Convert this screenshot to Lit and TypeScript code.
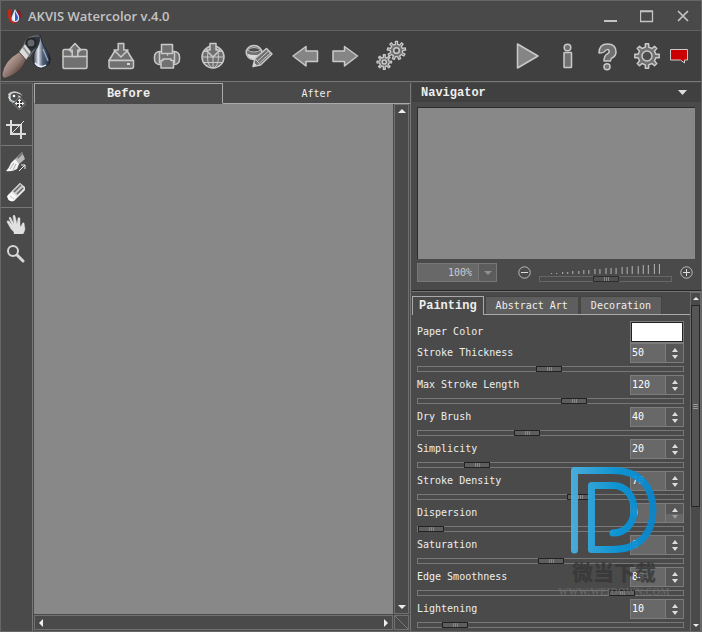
import { LitElement, html, css, svg, nothing, TemplateResult } from "lit";
import { customElement, property } from "lit/decorators.js";
import { classMap } from "lit/directives/class-map.js";

/** Outline of a cog wheel with square teeth. */
function cog(cx: number, cy: number, outer: number, root: number, teeth: number): string {
  const step = (Math.PI * 2) / teeth;
  const parts: string[] = [];
  for (let i = 0; i < teeth; i++) {
    const a = i * step - Math.PI / 2;
    const pts: Array<[number, number]> = [
      [root, a - step * 0.24],
      [outer, a - step * 0.17],
      [outer, a + step * 0.17],
      [root, a + step * 0.24],
    ];
    for (const [r, t] of pts) {
      parts.push(`${(cx + r * Math.cos(t)).toFixed(2)},${(cy + r * Math.sin(t)).toFixed(2)}`);
    }
  }
  return "M" + parts.join("L") + "Z";
}

const icons: Record<string, TemplateResult> = {
  open: svg`<path d="M3 10q0-1.5 1.5-1.5h5l2 2.5h7l2-2.500h5q1.500 0 1.500 1.500v16q0 1.500-1.500 1.500h-21.500Q3 27.500 3 26zM3 15.500h24.500"/><path d="M15 2.500l6 6.500h-3.200v6.500h-5.600V9H9z"/>`,
  save: svg`<path d="M8.500 10.500h13l5.500 9H3z"/><path d="M3 19.500h24.500v6q0 2-2 2H5q-2 0-2-2z"/><path d="M12.200 2.500h5.600v6.500H22l-7 7-7-7h4.200z"/><path class="lit" d="M21 22h3v2h-3z"/>`,
  print: svg`<rect x="2.500" y="10.500" width="25" height="13" rx="5"/><path d="M7.500 10.500v12M22.500 10.500v12"/><path d="M9.500 3.500h11v9h-11z"/><path d="M9 19.500h2v-1.500h8v1.500h2.500v7.500H9z"/><circle class="lit" cx="15.500" cy="14" r=".8"/>`,
  web: svg`<circle cx="15" cy="16" r="11"/><ellipse cx="15" cy="16" rx="5.500" ry="11" stroke-width="1"/><path d="M4 16h22M6 10.500h18M6 21.500h18M15 16v11" stroke-width="1"/><path d="M12 2.500h6v6.500h4l-7 7-7-7h4z"/>`,
  brush: svg`<ellipse cx="10" cy="11.500" rx="7.800" ry="7"/><path class="hole" d="M3 9q7-5 14 0-7 4-14 0z" stroke-width=".8"/><path class="lit" d="M3 12.500q6 2.500 12 1l-3 4.500q-7 1-9-5.500z"/><path d="M9 25.500l2-8L22.500 7.500l5.500 5.500L16.500 24z"/><path d="M13.500 20L25 9.500M15.500 22L27 11.500M11 17.500l5.500 6.500" stroke-width="1"/><path class="lit" d="M9 25.500l1-4 3 3z"/>`,
  back: svg`<path class="solid" d="M3 15L16 5.500v4.500h11.500v10.500H16V25z"/>`,
  forward: svg`<path class="solid" d="M27.500 15l-13-9.500v4.500H3v10.500h11.500V25z"/>`,
  batch: svg`<path d="${cog(20.5, 9.5, 9.2, 6.3, 9)}" stroke-width="1.300"/><circle class="hole" cx="20.500" cy="9.500" r="2.800"/><path d="${cog(8.3, 21, 7.3, 4.8, 8)}" stroke-width="1.300"/><circle class="hole" cx="8.300" cy="21" r="2"/>`,
  run: svg`<path class="solid" d="M5.500 3v24L26 15z"/>`,
  info: svg`<circle cx="15.500" cy="6.500" r="3.300"/><rect x="12" y="11.500" width="7.500" height="15" rx=".5"/>`,
  help: svg`<path d="M7 12Q7 3 15.500 3T24 11q0 4-4 6-1.500 1-1.500 3h-6.500q0-5 3-7 3-1.500 2-3.500-1.500-2-4 .5-1 2-6 2z"/><circle cx="15" cy="25.700" r="3"/>`,
  options: svg`<path d="${cog(15, 15, 12.3, 9, 8)}"/><circle class="hole" cx="15" cy="15" r="5"/>`,
};

@customElement("tool-icon")
export class ToolIcon extends LitElement {
  @property() name = "open";

  static styles = css`
    :host { display: block; width: 30px; height: 30px; }
    .art { display: block; fill: #707070; stroke: #c9c9c9; stroke-linejoin: round; overflow: visible; }
    .art .solid { fill: #858585; }
    .art .hole { fill: #4c4c4c; }
    .art .lit { fill: #d8d8d8; stroke: none; }
  `;

  render() {
    return html`<svg class="art" width="30" height="30" viewBox="0 0 30 30" stroke-width="1.500">${icons[this.name] ?? nothing}</svg>`;
  }
}

@customElement("slider-field")
export class SliderField extends LitElement {
  @property() label = "";
  @property({ type: Number }) value = 0;
  @property({ type: Number }) min = 0;
  @property({ type: Number }) max = 100;

  static styles = css`
    :host { display: block; }
    .line { display: flex; align-items: center; justify-content: space-between; height: 20px; }
    .label { line-height: 18px; }
    .spin { display: flex; box-sizing: border-box; width: 54px; height: 20px; border: 1px solid #7c7c7c; background: #686868; }
    .number { flex: 1; min-width: 0; border: 0; padding: 0 1px; background: none; color: #fff; font: inherit; outline: 0; }
    .steps { display: flex; flex-direction: column; gap: 1px; width: 17px; border-left: 1px solid #7c7c7c; background: #565656; }
    .step { display: flex; flex: 1; align-items: flex-end; justify-content: center; border: 0; padding: 0 0 1px; background: none; color: #dedede; }
    .step + .step { align-items: flex-start; padding: 1px 0 0; }
    .step:disabled { background: #686868; color: #999; }
    .tri { display: block; fill: currentColor; }
    .range { display: block; appearance: none; box-sizing: border-box; width: 100%; height: 6px; margin: 3px 0; border: 1px solid #787878; background: #4a4a4a; }
    .range::-webkit-slider-thumb {
      appearance: none; box-sizing: border-box; width: 26px; height: 6px; border: 1px solid #222;
      background:
        linear-gradient(#888, #888) 10px 0 / 1px 100% no-repeat,
        linear-gradient(#888, #888) 12px 0 / 1px 100% no-repeat,
        linear-gradient(#888, #888) 14px 0 / 1px 100% no-repeat,
        #5e5e5e;
    }
  `;

  private change(v: number) {
    this.value = Math.min(this.max, Math.max(this.min, v));
  }

  render() {
    return html`
      <div class="line">
        <label class="label" for="number">${this.label}</label>
        <div class="spin">
          <input id="number" class="number" inputmode="numeric" .value=${String(this.value)}
            @change=${(e: Event) => this.change(Number((e.target as HTMLInputElement).value))} />
          <div class="steps">
            <button class="step" aria-label="Increase ${this.label}" @click=${() => this.change(this.value + 1)}>
              <svg class="tri" width="6" height="4" viewBox="0 0 6 4"><path d="M3 0l3 4H0z" /></svg>
            </button>
            <button class="step" aria-label="Decrease ${this.label}" ?disabled=${this.value <= this.min && this.min === 0}
              @click=${() => this.change(this.value - 1)}>
              <svg class="tri" width="6" height="4" viewBox="0 0 6 4"><path d="M0 0h6L3 4z" /></svg>
            </button>
          </div>
        </div>
      </div>
      <input class="range" type="range" aria-label=${this.label} min=${this.min} max=${this.max}
        .value=${String(this.value)}
        @input=${(e: Event) => this.change(Number((e.target as HTMLInputElement).value))} />
    `;
  }
}

interface Setting { label: string; value: number; min?: number; max?: number }

const settings: Setting[] = [
  { label: "Stroke Thickness", value: 50, min: 1 },
  { label: "Max Stroke Length", value: 120, max: 200 },
  { label: "Dry Brush", value: 40 },
  { label: "Simplicity", value: 20, min: 1 },
  { label: "Stroke Density", value: 70, min: 20 },
  { label: "Dispersion", value: 0 },
  { label: "Saturation", value: 0, min: -100 },
  { label: "Edge Smoothness", value: 80 },
  { label: "Lightening", value: 10 },
];

const tools: Array<Array<{ title: string; art: TemplateResult }>> = [
  [
    {
      title: "Quick Preview",
      art: svg`<path d="M2 4Q7-1 14 3l3 3Q9 0 3 7z" fill="#ccc"/><path d="M2 7q6-6 13 0-2 5-7 5-4 0-6-5z" fill="#e4e4e4"/><circle cx="8.500" cy="7" r="4" fill="#4b5154"/><circle cx="8" cy="6" r="1.300" fill="#fff"/><path d="M3 10q3 3 7 3" fill="none" stroke="#bbb"/><path d="M13.500 7l6.500 6.500-6.500 6.500L7 13.500z" fill="#333" stroke="#8c8c8c"/><path d="M13.500 8.500l2 2.500h-1.400v2h1.900v-1.500l2.500 2-2.500 2V14h-1.900v2h1.400l-2 2.500-2-2.500h1.400v-2H11v1.500l-2.500-2 2.500-2V13h1.900v-2h-1.400z" fill="#f2f2f2"/>`,
    },
    {
      title: "Crop",
      art: svg`<path d="M0 5h15v14M5 0v14h15" fill="none" stroke="#ddd" stroke-width="2"/><path d="M6 13L18 1" stroke="#ddd"/>`,
    },
  ],
  [
    {
      title: "Stroke Direction",
      art: svg`<path d="M9 7l7-7 3 7-7 6z" fill="#b8b8b8"/><path d="M11 5l5-5 1 2-5 5z" fill="#777"/><path d="M0 19q3-3 5-8l4-4 4 5-2 5q-5 3-11 2z" fill="#f4f4f4"/><path d="M4 17l4-6M7 18l3-6" stroke="#aaa"/><path d="M13 19l6-6M15 13h4v4" fill="none" stroke="#eee"/>`,
    },
    {
      title: "Eraser",
      art: svg`<path d="M2 13L14 1l5 4v3L8 19q-4 1-6-2z" fill="#ececec"/><path d="M6 9l8-8 5 5-8 8z" fill="#ccc"/><path d="M8 10l7-7M11 12l6-6" stroke="#666" stroke-width="1.500"/><path d="M1 14l4-3 5 4-3 4q-5 1-6-5z" fill="#fafafa"/><path d="M4 14l4 3" stroke="#bbb"/>`,
    },
  ],
  [
    {
      title: "Hand",
      art: svg`<path d="M8 18L5 15 1 8q0-2 2-1l3 4-3-7q1-2 2 0l3 6-1-8q1-2 2 0l2 8 1-6q1-1 2 0v7l1 2 1-3q1-2 2-1l1 6q-1 5-4 7-4 2-7-1z" fill="#e0e0e0" stroke="#e0e0e0" stroke-width=".4"/>`,
    },
    {
      title: "Zoom",
      art: svg`<circle cx="7" cy="7" r="5" fill="#4a4a4a" stroke="#d6d6d6" stroke-width="2"/><path d="M11 11l6 6" stroke="#d6d6d6" stroke-width="3" stroke-linecap="round"/>`,
    },
  ],
];

const leftTools: Array<[string, string]> = [
  ["open", "Open Image"],
  ["save", "Save Image"],
  ["print", "Print Image"],
  ["web", "Publish"],
  ["brush", "Strokes"],
];

const rightTools: Array<[string, string]> = [
  ["run", "Run"],
  ["info", "About"],
  ["help", "Help"],
  ["options", "Preferences"],
];

@customElement("app-root")
export class AppRoot extends LitElement {
  static styles = css`
    :host {
      display: block; height: 100vh; color: #eee; background: #4a4a4a;
      font: 10px/18px "DejaVu Sans Mono", "Liberation Mono", "Noto Sans CJK SC", monospace;
    }
    button { border: 0; padding: 0; background: none; color: inherit; font: inherit; }
    svg { display: block; }
    .window { display: flex; flex-direction: column; box-sizing: border-box; height: 100%; border: 1px solid #666; overflow: hidden; }

    .titlebar { display: flex; align-items: center; height: 29px; padding-left: 6px; border-bottom: 1px solid #626262; background: #494949; }
    .title { flex: 1; margin: 0 0 0 5px; font: 600 13px/18px "Open Sans", "Noto Sans CJK SC", sans-serif; color: #c4c4c4; }
    .winbtn { display: grid; place-items: center; width: 36px; height: 28px; }

    .toolbar { display: flex; align-items: center; height: 50px; padding-right: 13px; border-bottom: 1px solid #777; background: #404040; }
    .logo { margin-right: 9px; }
    .group { display: flex; gap: 16px; margin-right: 16px; }
    .tight { gap: 10px; }
    .spacer { flex: 1; }
    .last { margin-right: 8px; }

    .body { display: flex; flex: 1; min-height: 0; padding-top: 1px; }
    .tools { display: flex; flex-direction: column; width: 31px; padding-top: 1px; border-right: 1px solid #777; border-top: 1px solid #5c5c5c; }
    .toolset { border-bottom: 1px solid #777; }
    .toolset:last-child { border-bottom: 0; }
    .tool { display: grid; place-items: center; width: 30px; height: 30px; }
    .toolset + .toolset { padding-top: 1px; }

    .document { display: flex; flex: 1; flex-direction: column; min-width: 0; margin-left: 1px; border-right: 1px solid #777; }
    .tabs { display: flex; height: 21px; }
    .tab { flex: 1; box-sizing: border-box; border-bottom: 1px solid #aaa; padding-top: 1px; }
    .active { border: 1px solid #aaa; border-bottom-color: transparent; padding-top: 0; font: 700 12px/18px "Liberation Mono", monospace; }
    .view { display: grid; flex: 1; grid-template-columns: 1fr 15px; grid-template-rows: 1fr 15px; gap: 1px; min-height: 0; padding-right: 1px; padding-bottom: 1px; }
    .canvas { background: #888; }
    .bar { display: flex; align-items: center; justify-content: space-between; box-sizing: border-box; border: 1px solid #707070; }
    .vertical { flex-direction: column; }
    .arrow { display: grid; place-items: center; width: 12px; height: 12px; }
    .corner { box-sizing: border-box; border: 1px solid #707070; }

    .side { position: relative; display: flex; flex-direction: column; width: 289px; min-height: 0; margin-left: 1px; }
    .head { display: flex; align-items: center; justify-content: space-between; height: 19px; padding: 0 13px 0 9px; background: #404040; }
    .heading { margin: 0; font: 700 12px/18px "Liberation Mono", monospace; }
    .preview { height: 151px; margin: 5px 6px 0 5px; border: solid #2c2c2c; border-width: 1px 0 0 1px; background: #888; }
    .zoomrow { display: flex; align-items: center; height: 27px; padding: 0 8px 4px 5px; border-bottom: 1px solid #252525; }
    .combo { position: relative; width: 80px; height: 19px; margin-right: 21px; }
    .percent { appearance: none; box-sizing: border-box; width: 100%; height: 100%; border: 1px solid #777; border-radius: 0; padding: 0 0 0 30px; background: #686868; color: #ccc; font: inherit; }
    .drop { position: absolute; top: 1px; right: 1px; display: grid; place-items: center; width: 17px; height: 17px; border-left: 1px solid #777; background: #5c5c5c; pointer-events: none; }
    .scale { flex: 1; margin: 0 8px; }
    .scale .ticks { width: 100%; height: 11px; }
    .zoom { display: block; appearance: none; box-sizing: border-box; width: 100%; height: 6px; margin: 1px 0 0; border: 1px solid #666; background: #4a4a4a; }
    .zoom::-webkit-slider-thumb {
      appearance: none; box-sizing: border-box; width: 26px; height: 6px; border: 1px solid #2e2e2e;
      background:
        linear-gradient(#888, #888) 10px 0 / 1px 100% no-repeat,
        linear-gradient(#888, #888) 12px 0 / 1px 100% no-repeat,
        linear-gradient(#888, #888) 14px 0 / 1px 100% no-repeat,
        #505050;
    }

    .lower { display: flex; flex: 1; min-height: 0; border-top: 1px solid #777; }
    .panel { flex: 1; min-width: 0; overflow: hidden; }
    .subtabs { display: flex; height: 23px; padding-top: 4px; box-sizing: border-box; border-bottom: 1px solid #aaa; }
    .subtab { box-sizing: border-box; height: 18px; margin-left: 1px; border: 1px solid #444; border-bottom: 0; background: #5e5e5e; padding: 0 10px; line-height: 17px; white-space: nowrap; }
    .chosen { height: 19px; margin-left: 0; border-color: #aaa; background: #4a4a4a; padding: 0 6px; font: 700 12px/18px "Liberation Mono", monospace; }
    .settings { padding: 5px 6px 0 5px; }
    .paper { display: flex; align-items: center; justify-content: space-between; height: 23px; }
    .swatch { appearance: none; box-sizing: border-box; width: 54px; height: 22px; border: 1px solid #7c7c7c; padding: 0; background: #222; }
    .swatch::-webkit-color-swatch-wrapper { padding: 1px; }
    .swatch::-webkit-color-swatch { border: 0; border-radius: 0; }
    .scroll { display: flex; flex-direction: column; align-items: center; box-sizing: border-box; width: 11px; border: 1px solid #6c6c6c; border-bottom: 0; }
    .thumb { display: grid; place-items: center; box-sizing: border-box; width: 9px; height: 202px; border: 1px solid #262626; background: #555; }

    .mark { position: absolute; top: 383px; right: 31px; width: 112px; display: flex; flex-direction: column; align-items: center; pointer-events: none; }
    .name { font: 900 21px/30px "Noto Sans CJK SC", sans-serif; color: rgba(54, 54, 54, 0.8); }
    .site { font: 700 10px/12px "Liberation Serif", serif; color: rgba(110, 110, 110, 0.7); }
  `;

  private toolButton(name: string, title: string) {
    return html`<button title=${title} aria-label=${title}><tool-icon name=${name}></tool-icon></button>`;
  }

  private arrow(label: string, d: string) {
    return html`<button class="arrow" aria-label=${label}>
      <svg width="8" height="8" viewBox="0 0 8 8"><path d=${d} fill="#eee" /></svg>
    </button>`;
  }

  private ticks() {
    return Array.from({ length: 21 }, (_, i) => {
      const h = 1 + Math.round(i * 0.45);
      return svg`<rect x=${12 + Math.round(i * 5.35)} y=${10 - h} width="1" height=${h} fill="#b4b4b4" />`;
    });
  }

  render() {
    return html`
      <div class="window">
        <header class="titlebar">
          <svg width="16" height="16" viewBox="0 0 16 16">
            <path d="M1 2l4-1-1 4q-1 6 3 9l5-1q-3 3-7 2Q0 12 1 2z" fill="#c22a18" />
            <path d="M10 1q5 2 4 8l-2 4z" fill="#8a1b22" />
            <path d="M8 1l4 7q1 6-4 6-5-1-3-6z" fill="#cfe2ff" />
            <path d="M8 3l3 6q0 4-3 4z" fill="#3657c8" />
            <path d="M6 9q0 3 2 4V6z" fill="#fff" />
          </svg>
          <h1 class="title">AKVIS Watercolor v.4.0</h1>
          <button class="winbtn" aria-label="Minimize">
            <svg width="14" height="14" viewBox="0 0 14 14"><path d="M0 12h13" stroke="#c4c4c4" stroke-width="2" /></svg>
          </button>
          <button class="winbtn" aria-label="Maximize">
            <svg width="14" height="14" viewBox="0 0 14 14"><path d="M.5 2.500v10h12v-10zM0 2h13" fill="none" stroke="#c4c4c4" stroke-width="1.300" /></svg>
          </button>
          <button class="winbtn" aria-label="Close">
            <svg width="14" height="14" viewBox="0 0 14 14"><path d="M2 2l10 10M12 2L2 12" stroke="#c4c4c4" stroke-width="1.700" /></svg>
          </button>
        </header>

        <div class="toolbar">
          <svg class="logo" width="50" height="50" viewBox="0 0 50 50">
            <defs>
              <linearGradient id="wood" x1="0" y1="0" x2="1" y2="1">
                <stop offset=".2" stop-color="#c4aea6" /><stop offset=".55" stop-color="#8c746c" /><stop offset=".8" stop-color="#4a3632" />
              </linearGradient>
              <linearGradient id="drop" x1="0" y1="0" x2="1" y2="0">
                <stop offset="0" stop-color="#202838" /><stop offset=".3" stop-color="#e4eaf0" />
                <stop offset=".55" stop-color="#56657c" /><stop offset="1" stop-color="#1d2333" />
              </linearGradient>
            </defs>
            <path d="M23 14Q25 4 39 5l1 9-8 6-4 6z" fill="#30353c" stroke="#777c82" />
            <circle cx="30" cy="12" r="4.500" fill="#62686c" stroke="#22262c" stroke-width="2" />
            <path d="M18 21l6-8 6 8-5 8z" fill="#dcdcdc" stroke="#777" stroke-width=".5" />
            <path d="M22 16l6 8" stroke="#999" stroke-width="2" />
            <path d="M18 21l7 8Q21 42 5 47q-4 1-4-4 2-13 17-22z" fill="url(#wood)" stroke="#38302e" stroke-width=".7" />
            <path d="M39 4q1 8 7 16 6 9 1 14-7 6-13 0-4-5 0-14 5-6 5-16z" fill="url(#drop)" stroke="#161c28" stroke-width=".7" />
            <path d="M34 32q5 6 11 2" fill="none" stroke="#e8f0f8" stroke-width="1.500" />
            <path d="M42 18l5 12" stroke="#90a4bc" stroke-width="1.500" />
          </svg>
          <div class="group">${leftTools.map(([n, t]) => this.toolButton(n, t))}</div>
          <div class="group tight">${this.toolButton("back", "Undo")}${this.toolButton("forward", "Redo")}</div>
          ${this.toolButton("batch", "Batch Processing")}
          <div class="spacer"></div>
          <div class="group tight last">${rightTools.map(([n, t]) => this.toolButton(n, t))}</div>
          <button title="News" aria-label="News">
            <svg width="18" height="16" viewBox="0 0 18 16">
              <path d="M.5 1.500h17v10.500h-3v3l-4-3H.5z" fill="#cb0000" stroke="#ccc" />
            </svg>
          </button>
        </div>

        <div class="body">
          <nav class="tools" aria-label="Tools">
            ${tools.map((set) => html`<div class="toolset">${set.map((t) => html`
              <button class="tool" title=${t.title} aria-label=${t.title}>
                <svg width="20" height="20" viewBox="0 0 20 20">${t.art}</svg>
              </button>`)}</div>`)}
          </nav>

          <main class="document">
            <div class="tabs" role="tablist">
              <button class="tab active" role="tab" aria-selected="true">Before</button>
              <button class="tab" role="tab" aria-selected="false">After</button>
            </div>
            <div class="view">
              <div class="canvas"></div>
              <div class="bar vertical">${this.arrow("Up", "M4 2l4 4H0z")}${this.arrow("Down", "M0 2h8L4 6z")}</div>
              <div class="bar">${this.arrow("Left", "M2 4l4-4v8z")}${this.arrow("Right", "M2 0l4 4-4 4z")}</div>
              <div class="corner">
                <svg width="13" height="13" viewBox="0 0 13 13"><path d="M0 0l13 13" stroke="#777" /></svg>
              </div>
            </div>
          </main>

          <aside class="side">
            <div class="head">
              <h2 class="heading">Navigator</h2>
              <button aria-label="Collapse Navigator">
                <svg width="10" height="6" viewBox="0 0 10 6"><path d="M0 0h9L4.500 5z" fill="#ddd" /></svg>
              </button>
            </div>
            <div class="preview"></div>
            <div class="zoomrow">
              <div class="combo">
                <select class="percent" aria-label="Zoom"><option>100%</option></select>
                <span class="drop"><svg width="8" height="4" viewBox="0 0 8 4"><path d="M0 0h8L4 4z" fill="#909090" /></svg></span>
              </div>
              <button aria-label="Zoom out">
                <svg width="13" height="13" viewBox="0 0 13 13"><circle cx="6.500" cy="6.500" r="5.700" fill="none" stroke="#bbb" /><path d="M3 6.500h7" stroke="#ddd" /></svg>
              </button>
              <div class="scale">
                <svg class="ticks" viewBox="0 0 132 11" preserveAspectRatio="none">${this.ticks()}</svg>
                <input class="zoom" type="range" aria-label="Zoom level" min="0" max="100" value="50" />
              </div>
              <button aria-label="Zoom in">
                <svg width="13" height="13" viewBox="0 0 13 13"><circle cx="6.500" cy="6.500" r="5.700" fill="none" stroke="#bbb" /><path d="M3 6.500h7M6.500 3v7" stroke="#ddd" /></svg>
              </button>
            </div>

            <div class="lower">
              <div class="panel">
                <div class="subtabs" role="tablist">
                  ${["Painting", "Abstract Art", "Decoration"].map((t, i) => html`
                    <button role="tab" class=${classMap({ subtab: true, chosen: i === 0 })} aria-selected=${i === 0}>${t}</button>`)}
                </div>
                <div class="settings">
                  <div class="paper">
                    <label for="paper">Paper Color</label>
                    <input id="paper" class="swatch" type="color" value="#ffffff" />
                  </div>
                  ${settings.map((s) => html`
                    <slider-field .label=${s.label} .value=${s.value} .min=${s.min ?? 0} .max=${s.max ?? 100}></slider-field>`)}
                </div>
              </div>
              <div class="scroll">
                ${this.arrow("Scroll up", "M4 2l3 3H1z")}
                <div class="thumb">
                  <svg width="5" height="5" viewBox="0 0 5 5"><path d="M0 .5h5M0 2.500h5M0 4.500h5" stroke="#999" /></svg>
                </div>
                <div class="spacer"></div>
                ${this.arrow("Scroll down", "M1 3h6L4 6z")}
              </div>
            </div>

            <div class="mark">
              <svg width="88" height="90" viewBox="0 0 88 90">
                <defs>
                  <linearGradient id="blue" gradientUnits="userSpaceOnUse" x1="0" y1="0" x2="88" y2="0">
                    <stop offset="0" stop-color="#4bb4e4" /><stop offset=".55" stop-color="#0898dc" /><stop offset="1" stop-color="#0884cc" />
                  </linearGradient>
                </defs>
                <path d="M4.500 84V4.500H43C69 4.500 83 20 83 44S69 83.500 43 83.500H21.500V19.500H43C56 19.500 64 30 64 44S55 67 43 67"
                  fill="none" stroke="url(#blue)" stroke-width="7" stroke-linecap="round" stroke-linejoin="round" opacity=".93" />
              </svg>
              <span class="name">微当下载</span>
              <span class="site">WWW.WEIDOWN.COM</span>
            </div>
          </aside>
        </div>
      </div>
    `;
  }
}
